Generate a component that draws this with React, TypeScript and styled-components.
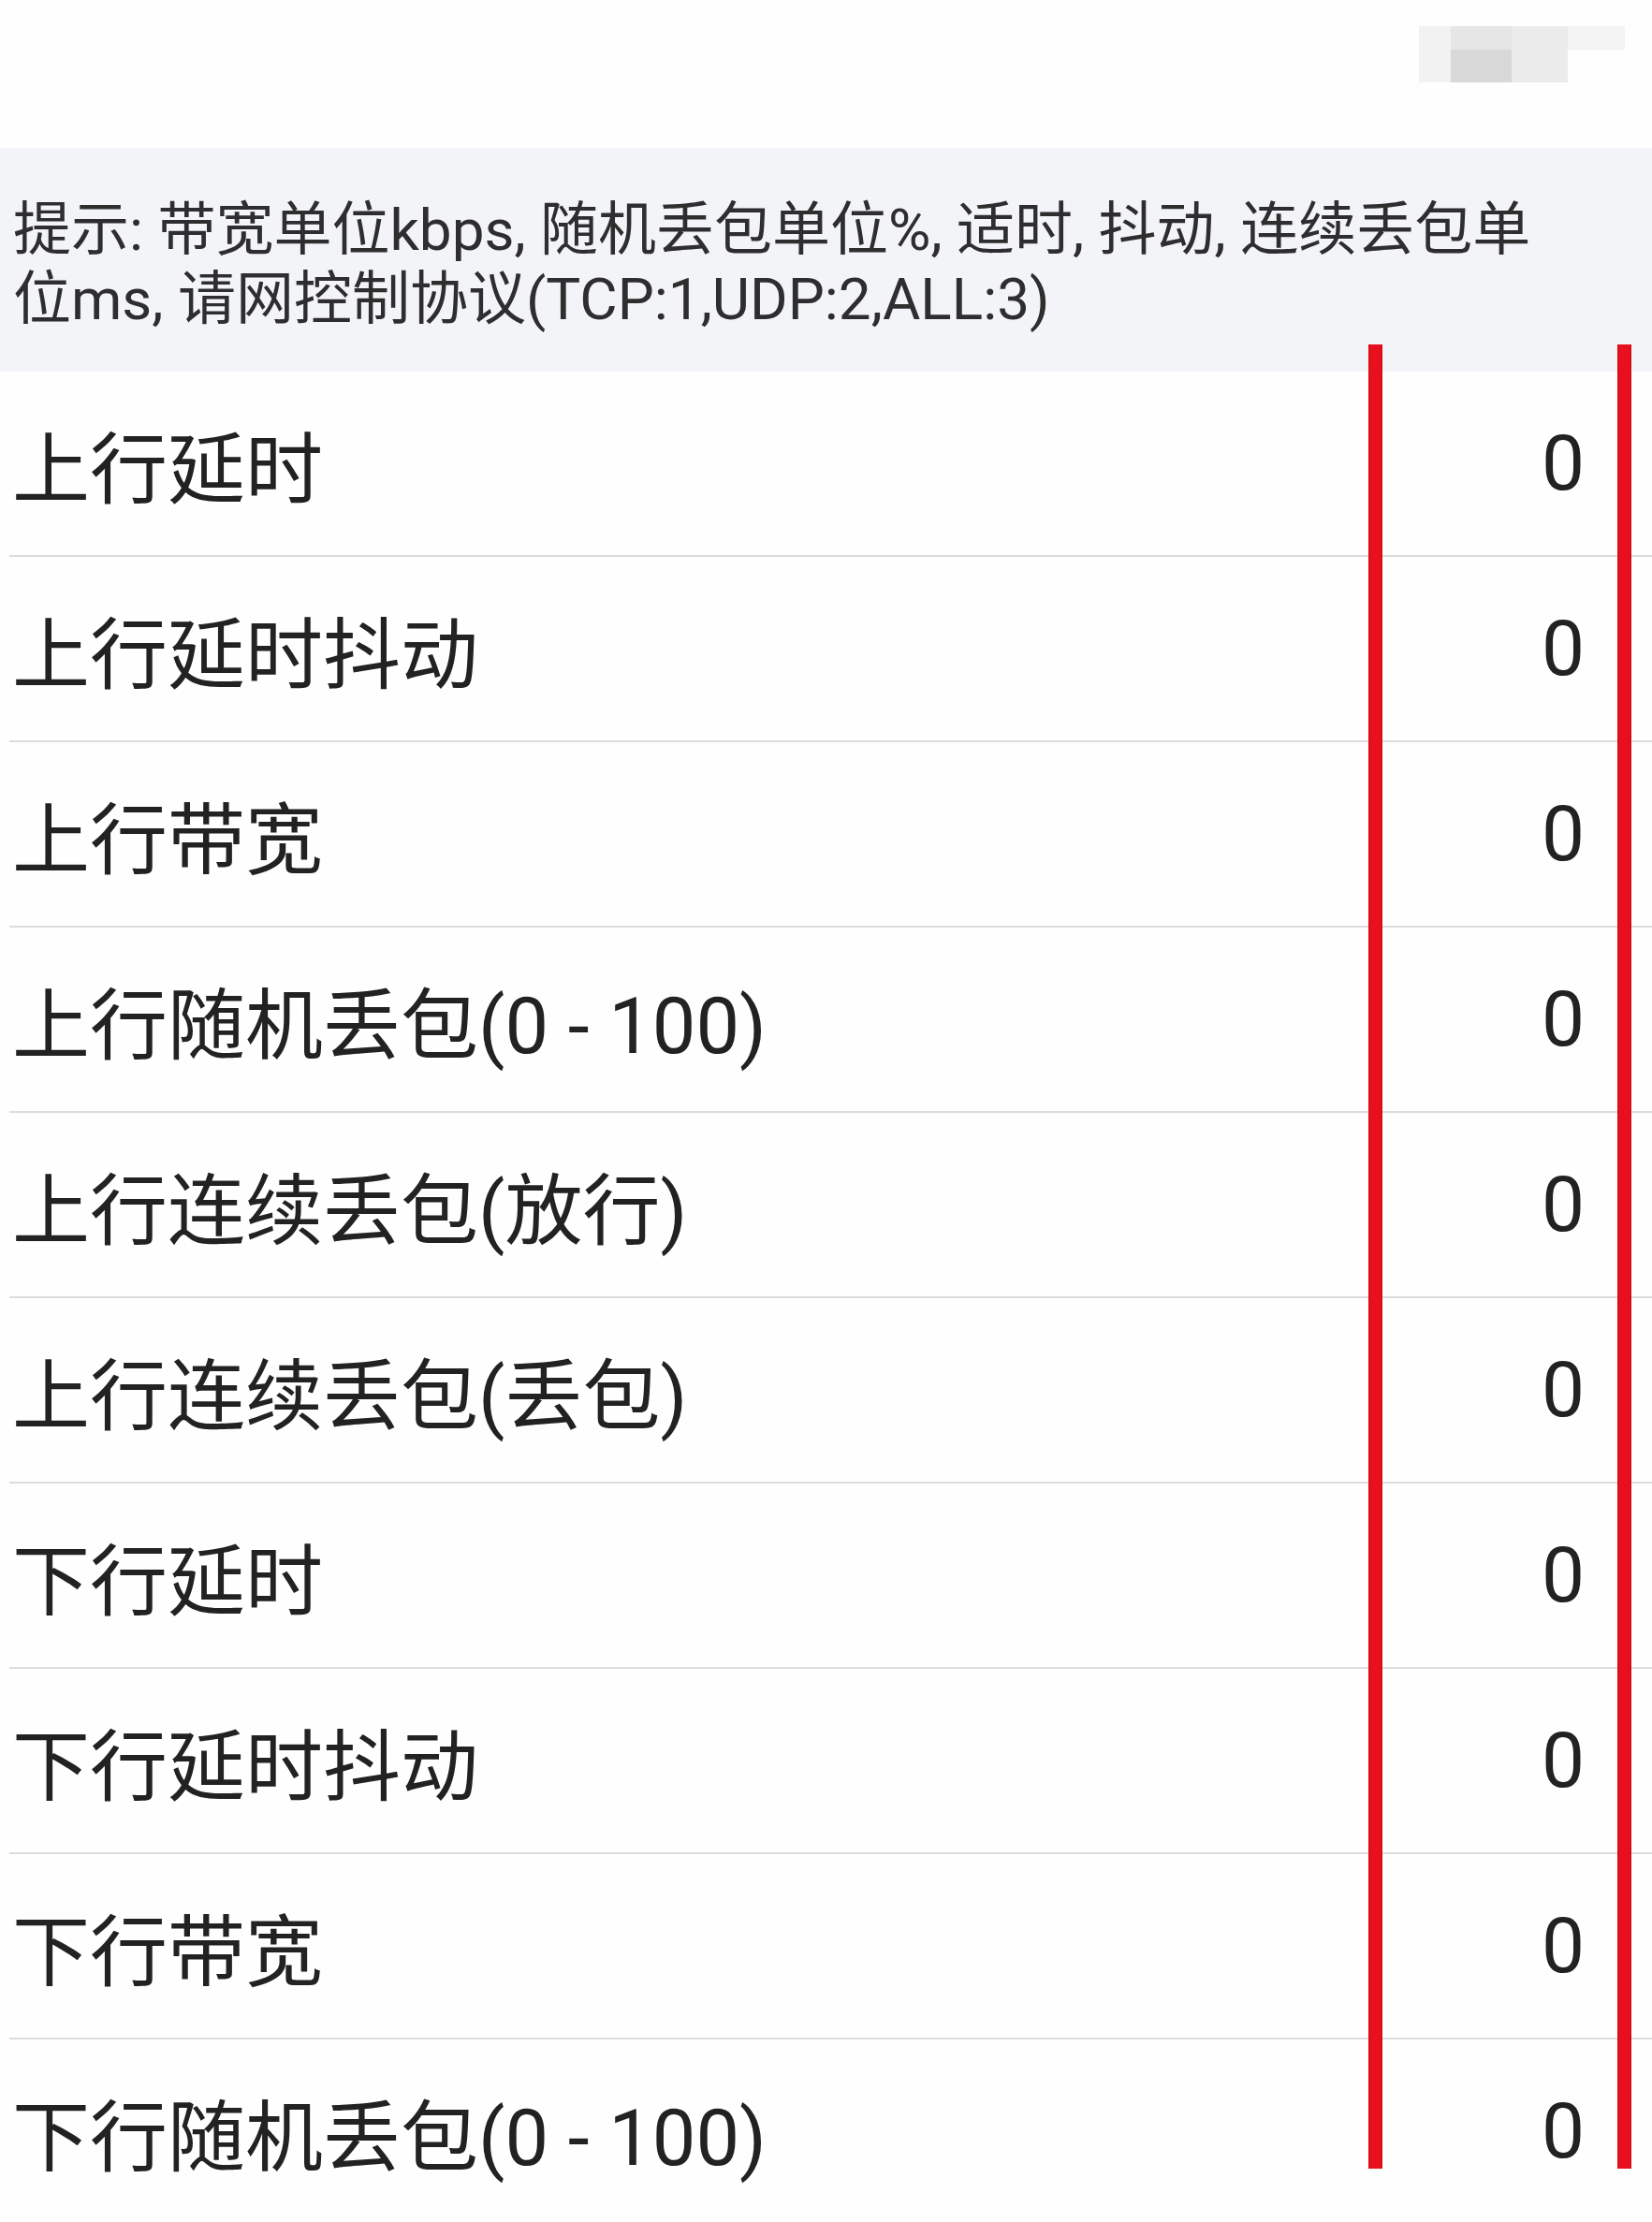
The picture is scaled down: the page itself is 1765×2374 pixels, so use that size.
import React from "react";
import styled, { createGlobalStyle } from "styled-components";

const GlobalStyle = createGlobalStyle`
  html, body {
    margin: 0;
    padding: 0;
    background: #fefefe;
  }
  body {
    font-family: Roboto, "Noto Sans CJK SC", "Noto Sans", sans-serif;
    -webkit-font-smoothing: antialiased;
  }
`;

const Page = styled.div`
  position: relative;
  width: 1765px;
  height: 2374px;
  overflow: hidden;
  background: #fefefe;
`;

const TopBar = styled.div`
  height: 158px;
  box-sizing: border-box;
  display: flex;
  justify-content: flex-end;
  align-items: flex-start;
  padding: 28px 29px 0 0;
`;

// pixelated (blurred-out) action in the top right corner
const Mosaic = styled.div`
  display: grid;
  grid-template-columns: 34px 65px 60px 61px;
  grid-template-rows: 25px 35px;
`;

const Tile = styled.div<{ $tone: string; $tall?: boolean }>`
  background: ${(p) => p.$tone};
  grid-row: ${(p) => (p.$tall ? "span 2" : "auto")};
`;

const HintBand = styled.div`
  height: 239px;
  box-sizing: border-box;
  background: #f3f4f8;
  padding: 51px 110px 0 14px;
  font-size: 62px;
  line-height: 74px;
  color: #2e2e2e;
`;

const List = styled.div`
  display: flex;
  flex-direction: column;
`;

const Item = styled.div`
  padding-left: 10px;
`;

const ItemInner = styled.div<{ $last?: boolean }>`
  height: 196px;
  display: flex;
  align-items: center;
  justify-content: space-between;
  padding: 0 72px 0 3px;
  border-bottom: 2px solid ${(p) => (p.$last ? "transparent" : "#dcdcdc")};
`;

const Label = styled.span`
  font-size: 83px;
  color: #222;
`;

const Value = styled.span`
  font-size: 82px;
  color: #222;
`;

const RedLine = styled.div<{ $left: number }>`
  position: absolute;
  top: 368px;
  left: ${(p) => p.$left}px;
  width: 15px;
  height: 1949px;
  background: #e8101e;
  box-shadow: inset 2px 0 0 rgba(180, 0, 10, 0.25), inset -2px 0 0 rgba(180, 0, 10, 0.25);
`;

const rows = [
  "上行延时",
  "上行延时抖动",
  "上行带宽",
  "上行随机丢包(0 - 100)",
  "上行连续丢包(放行)",
  "上行连续丢包(丢包)",
  "下行延时",
  "下行延时抖动",
  "下行带宽",
  "下行随机丢包(0 - 100)",
];

const App: React.FC = () => {
  return (
    <>
      <GlobalStyle />
      <Page>
        <TopBar>
          <Mosaic>
            <Tile $tone="#f2f2f2" $tall />
            <Tile $tone="#e6e6e6" />
            <Tile $tone="#ebebeb" $tall />
            <Tile $tone="#f3f3f3" />
            <Tile $tone="#d8d8d8" />
            <Tile $tone="transparent" />
          </Mosaic>
        </TopBar>

        <HintBand>
          提示: 带宽单位kbps, 随机丢包单位%, 适时, 抖动, 连续丢包单位ms, 请网控制协议(TCP:1,UDP:2,ALL:3)
        </HintBand>

        <List>
          {rows.map((label, i) => (
            <Item key={i}>
              <ItemInner $last={i === rows.length - 1}>
                <Label>{label}</Label>
                <Value>0</Value>
              </ItemInner>
            </Item>
          ))}
        </List>

        <RedLine $left={1462} />
        <RedLine $left={1728} />
      </Page>
    </>
  );
};

export default App;
